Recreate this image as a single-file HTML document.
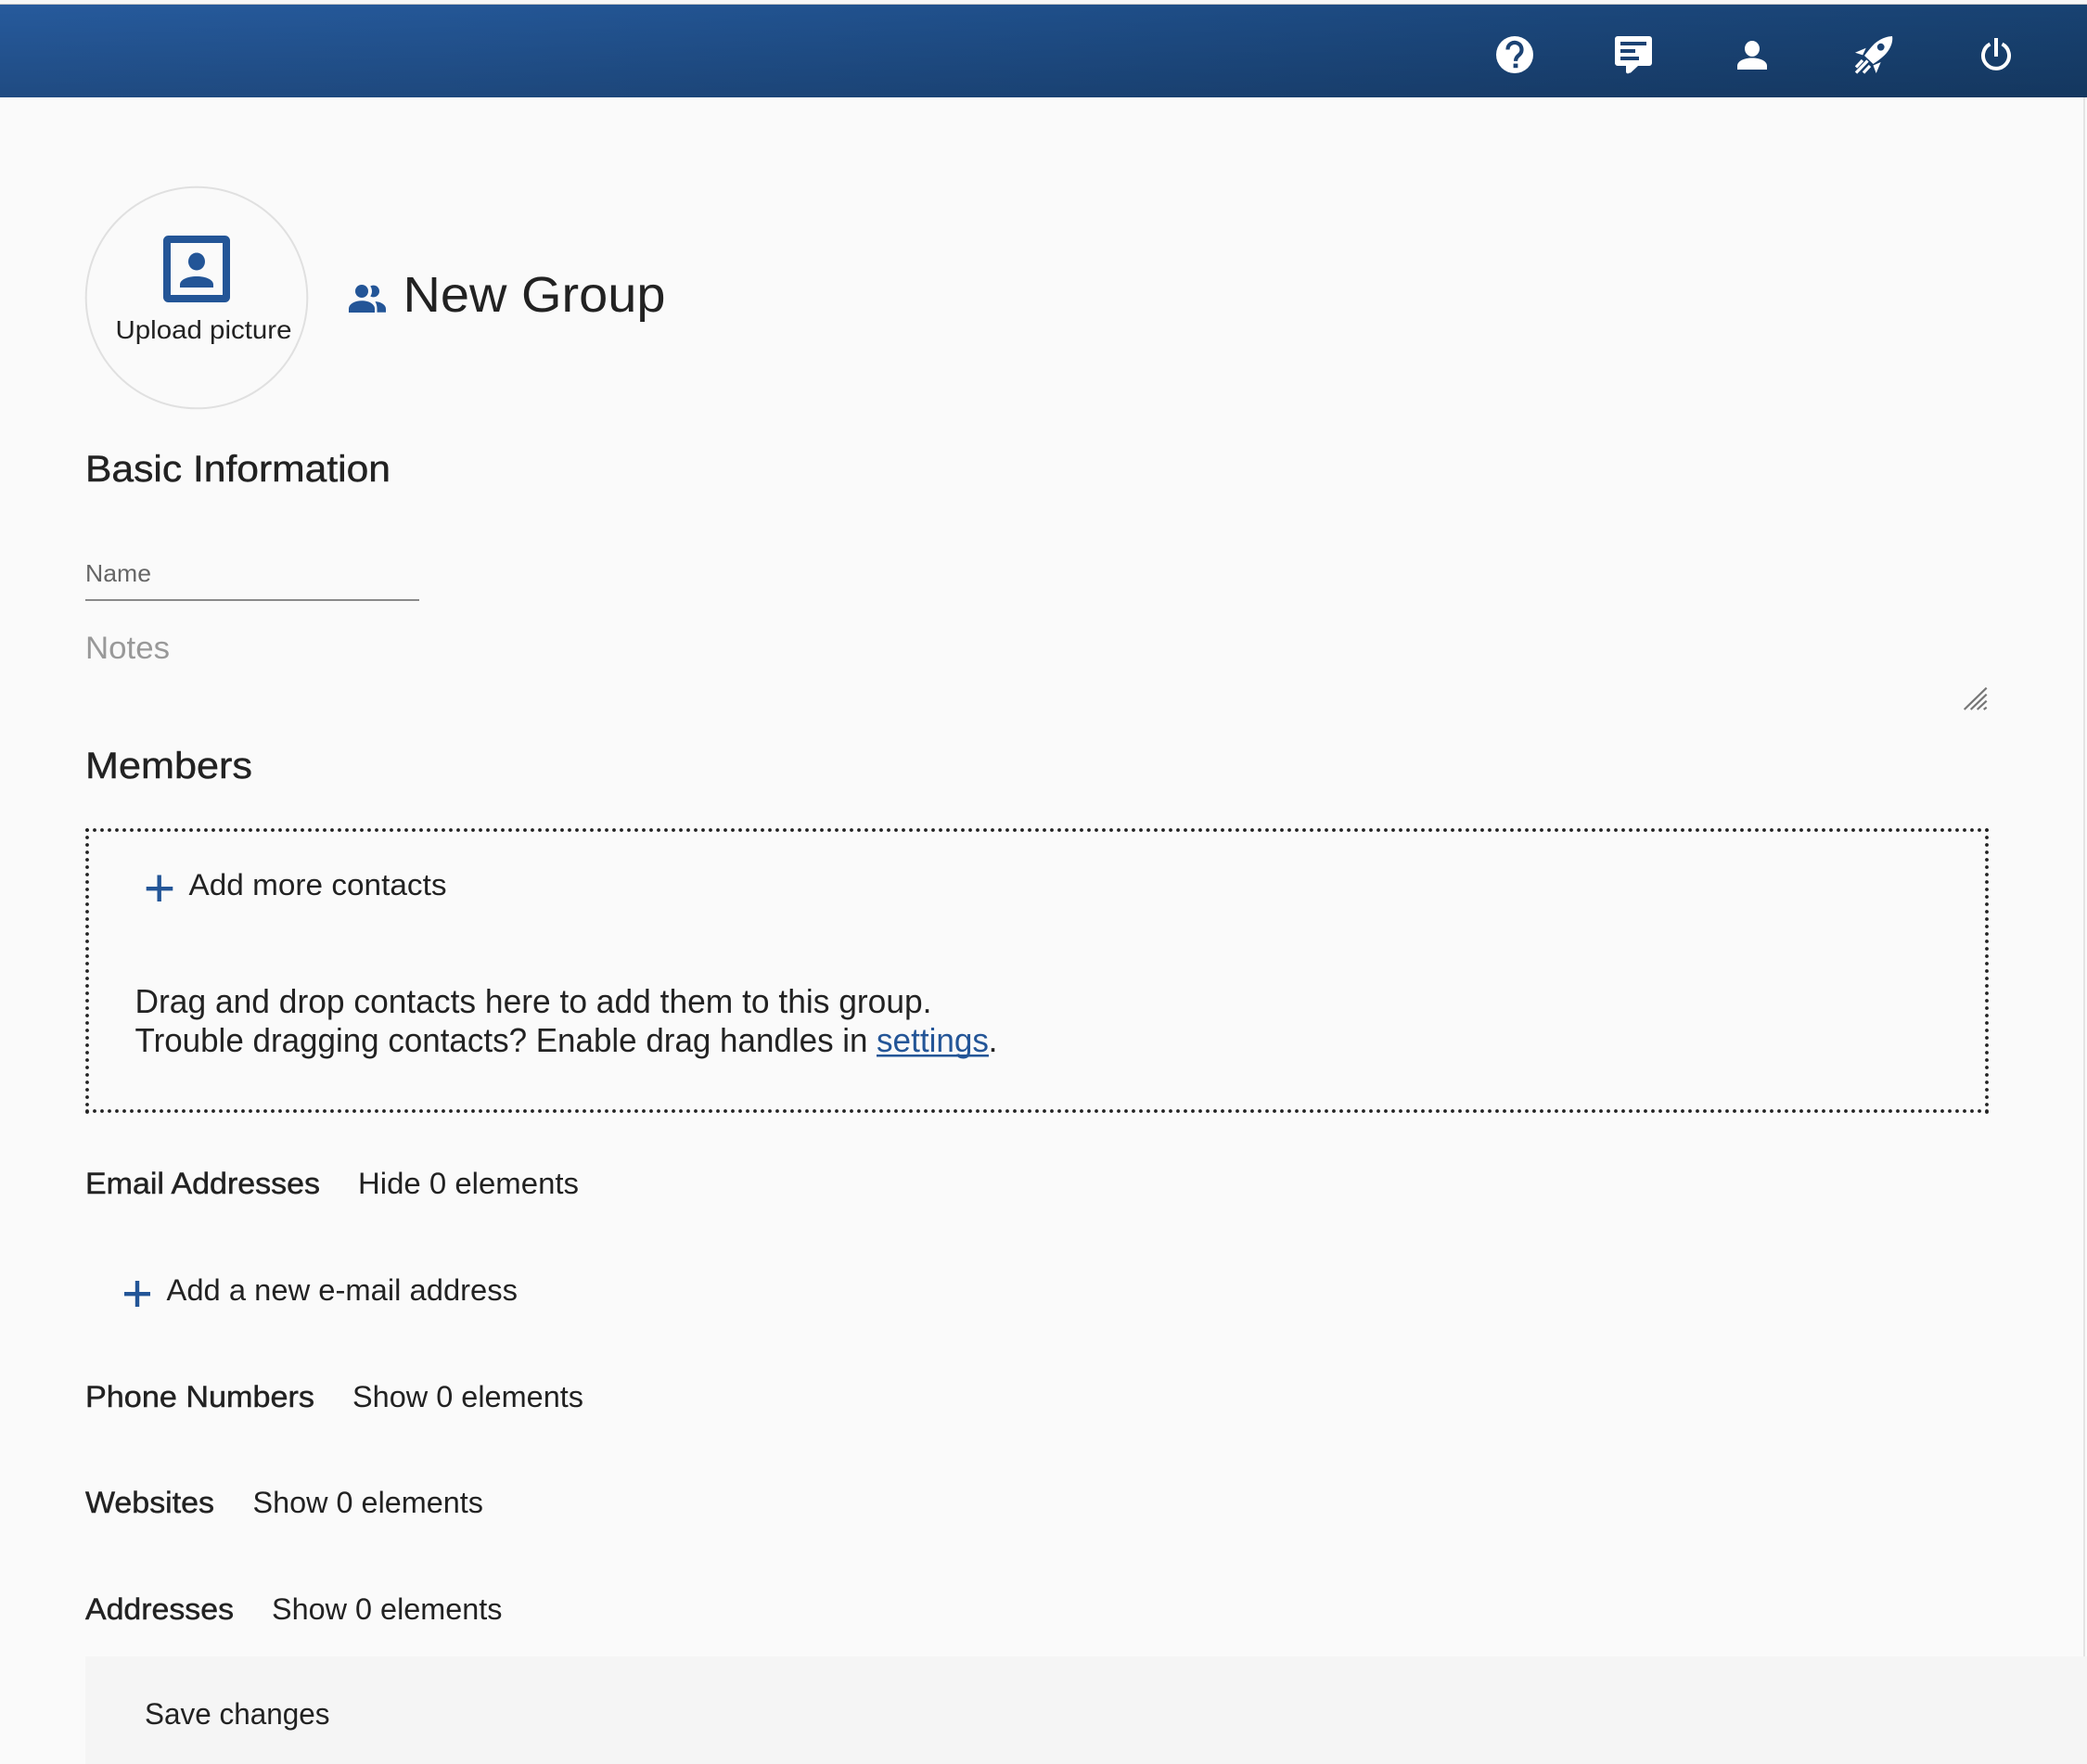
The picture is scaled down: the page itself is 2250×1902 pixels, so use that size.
<!DOCTYPE html>
<html lang="en">
<head>
<meta charset="utf-8">
<title>New Group</title>
<style>
html,body{margin:0;padding:0;width:2250px;height:1902px;overflow:hidden;background:#fafafa}
#hdr{position:absolute;left:0;top:0;width:2250px;height:105px;box-sizing:border-box;background:#f7f7f7}
#hdr i{position:absolute;display:block;left:0;top:4px;width:2250px;height:1px;background:#c9c9c9}
#hdr b{position:absolute;display:block;left:0;top:5px;width:2250px;height:100px;background:linear-gradient(180deg,rgba(0,0,0,0) 0%,rgba(0,0,0,.17) 100%),linear-gradient(90deg,#265a9c 0%,#245797 20%,#1f4f8a 50%,#1b477c 75%,#184272 100%)}
#foot{position:absolute;left:92px;top:1786px;width:2158px;height:116px;background:#f5f5f5}
#sb{position:absolute;left:2246px;top:105px;width:2px;height:1681px;background:#e4e4e4}
svg{position:absolute;left:0;top:0}
text{font-family:"Liberation Sans",sans-serif;fill:#222}
.m{stroke:#222;stroke-width:.45px}
</style>
</head>
<body>
<div id="hdr"><i></i><b></b></div>
<div id="sb"></div>
<div id="foot"></div>
<svg width="2250" height="1902" viewBox="0 0 2250 1902" xmlns="http://www.w3.org/2000/svg">
  <!-- help -->
  <circle cx="1633" cy="59" r="20" fill="#fff"/>
  <path d="M1625.5 53.5a7.5 7.5 0 1 1 12.6 5.4c-2.4 2.2-4 3.4-4 7" fill="none" stroke="#1b4273" stroke-width="4.2"/>
  <rect x="1631.6" y="68.6" width="4.8" height="4.6" fill="#1b4273"/>
  <!-- chat -->
  <path d="M1744 39h34a3 3 0 0 1 3 3v26a3 3 0 0 1-3 3h-12l-7.500 7a2 2 0 0 1-2 .6 2 2 0 0 1-3.500-1.600V71h-9a3 3 0 0 1-3-3V42a3 3 0 0 1 3-3z" fill="#fff"/>
  <rect x="1747" y="45" width="28" height="4" fill="#1b4273"/>
  <rect x="1747" y="53" width="16" height="4" fill="#1b4273"/>
  <rect x="1747" y="61" width="20" height="4" fill="#1b4273"/>
  <!-- person -->
  <ellipse cx="1889" cy="52.500" rx="8" ry="8.500" fill="#fff"/>
  <path d="M1873 75v-4c0-5 7-8.500 16-8.500s16 3.500 16 8.500v4z" fill="#fff"/>
  <!-- rocket -->
  <path d="M2040 39C2033 39.500 2027 42 2021 47C2017 51 2013 56 2010 60L2019.500 69C2024 66 2030 62 2034 57C2039 51 2041 44 2040 39z" fill="#fff"/>
  <circle cx="2027.700" cy="50.700" r="3.900" fill="#1b4273"/>
  <path d="M2000 56.700l11.700-5-3.500 7.700zM2019.500 70.500l8.200-3.500-5 12z" fill="#fff"/>
  <path d="M2001 72.500l7-7.500M2001 78.500l12.500-13M2009 78.500l7-7.500" stroke="#fff" stroke-width="3.200" fill="none"/>
  <!-- power -->
  <path d="M2145.500 47.500a14 14 0 1 0 13 0" fill="none" stroke="#fff" stroke-width="4"/>
  <rect x="2150" y="41" width="4" height="20" fill="#fff"/>

  <!-- avatar -->
  <circle cx="212" cy="321" r="119.300" fill="#fafafa" stroke="#e0e0e0" stroke-width="2"/>
  <rect x="180" y="258" width="64" height="64" rx="1.500" fill="none" stroke="#235597" stroke-width="8"/>
  <ellipse cx="212" cy="282" rx="9" ry="9.500" fill="#235597"/>
  <path d="M194 310v-3c0-5.500 8-9 18-9s18 3.500 18 9v3z" fill="#235597"/>
  <text x="124.500" y="365" font-size="28" textLength="190" lengthAdjust="spacingAndGlyphs">Upload picture</text>

  <!-- group icon -->
  <circle cx="402.600" cy="314" r="6.400" fill="#235597"/>
  <circle cx="391.500" cy="314" r="9.500" fill="#fafafa"/>
  <circle cx="390" cy="314" r="7" fill="#235597"/>
  <path d="M376 337v-4c0-5 6-8.700 14-8.700s14 3.700 14 8.700v4z" fill="#235597"/>
  <path d="M404.500 325c7 .5 11.500 4 11.500 8v3.700h-9.500V333c0-3-.7-5.600-2-8z" fill="#235597"/>
  <text x="434.500" y="336" font-size="54" textLength="283" lengthAdjust="spacingAndGlyphs">New Group</text>

  <!-- basic info -->
  <text class="m" x="92" y="519" font-size="40" textLength="329" lengthAdjust="spacingAndGlyphs">Basic Information</text>
  <text x="92" y="627" font-size="26" textLength="71" lengthAdjust="spacingAndGlyphs" style="fill:#666">Name</text>
  <rect x="92" y="646" width="360" height="2" fill="#8a8a8a"/>
  <text x="92" y="710" font-size="34" textLength="91" lengthAdjust="spacingAndGlyphs" style="fill:#999">Notes</text>
  <path d="M2117.700 765l24-23.300M2124.700 765l17-16.300M2131.700 765l10-9.300M2138.700 765l3-2.300" stroke="#777" stroke-width="2.200" fill="none"/>

  <!-- members -->
  <text class="m" x="92" y="839" font-size="40" textLength="180" lengthAdjust="spacingAndGlyphs">Members</text>
  <g stroke="#222" stroke-width="3.800" stroke-linecap="round" stroke-dasharray="0 8" fill="none">
    <path d="M94 895H2144"/>
    <path d="M94 1198H2144"/>
    <path d="M94 895V1200"/>
    <path d="M2142 895V1200"/>
  </g>
  <path d="M157.700 956h28.600v4.400h-28.600zM169.500 943.500h4.400V972h-4.400z" fill="#235597"/>
  <text x="203.500" y="965" font-size="32" textLength="278" lengthAdjust="spacingAndGlyphs">Add more contacts</text>
  <text x="145.500" y="1092" font-size="36" textLength="859" lengthAdjust="spacingAndGlyphs">Drag and drop contacts here to add them to this group.</text>
  <text x="145.500" y="1134" font-size="36" textLength="790" lengthAdjust="spacingAndGlyphs">Trouble dragging contacts? Enable drag handles in</text>
  <text x="945" y="1134" font-size="36" textLength="121" lengthAdjust="spacingAndGlyphs" style="fill:#235597">settings</text>
  <rect x="945" y="1137" width="121" height="2.500" fill="#235597"/>
  <text x="1065.500" y="1134" font-size="36">.</text>

  <!-- sections -->
  <text class="m" x="92" y="1287" font-size="32" textLength="253" lengthAdjust="spacingAndGlyphs">Email Addresses</text>
  <text x="386" y="1287" font-size="32" textLength="238" lengthAdjust="spacingAndGlyphs">Hide 0 elements</text>
  <path d="M134 1393h28v4.400h-28zM145.800 1381h4.400v28h-4.400z" fill="#235597"/>
  <text x="179.500" y="1402" font-size="32" textLength="378.500" lengthAdjust="spacingAndGlyphs">Add a new e-mail address</text>

  <text class="m" x="92" y="1517" font-size="32" textLength="247" lengthAdjust="spacingAndGlyphs">Phone Numbers</text>
  <text x="380" y="1517" font-size="32" textLength="249" lengthAdjust="spacingAndGlyphs">Show 0 elements</text>

  <text class="m" x="92" y="1631" font-size="32" textLength="139" lengthAdjust="spacingAndGlyphs">Websites</text>
  <text x="272.500" y="1631" font-size="32" textLength="248.500" lengthAdjust="spacingAndGlyphs">Show 0 elements</text>

  <text class="m" x="92" y="1746" font-size="32" textLength="160" lengthAdjust="spacingAndGlyphs">Addresses</text>
  <text x="293" y="1746" font-size="32" textLength="248.500" lengthAdjust="spacingAndGlyphs">Show 0 elements</text>

  <text x="156" y="1859" font-size="32" textLength="199.500" lengthAdjust="spacingAndGlyphs">Save changes</text>
</svg>
</body>
</html>
